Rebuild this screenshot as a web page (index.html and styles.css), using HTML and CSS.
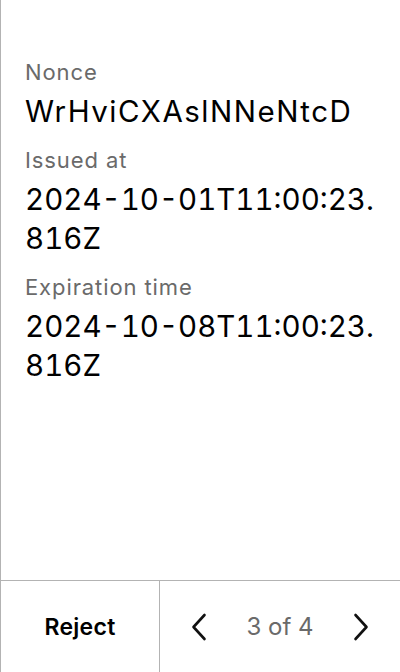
FILE: index.html
```html
<!DOCTYPE html>
<html lang="en">
<head>
<meta charset="utf-8">
<title>Sign request</title>
<link rel="stylesheet" href="styles.css">
</head>
<body>
<div class="screen">
  <main class="details">
    <div class="field">
      <div class="label">Nonce</div>
      <div class="value value-text">WrHviCXAslNNeNtcD</div>
    </div>
    <div class="field">
      <div class="label">Issued at</div>
      <div class="value">2024-10-01T11:00:23.816Z</div>
    </div>
    <div class="field">
      <div class="label">Expiration time</div>
      <div class="value">2024-10-08T11:00:23.816Z</div>
    </div>
  </main>
  <footer class="footer">
    <button class="reject">Reject</button>
    <div class="pager">
      <button class="arrow" aria-label="Previous">
        <svg viewBox="0 0 16 28" width="16" height="28"><polyline points="13.5,2 2.5,14 13.5,26" fill="none" stroke="#111" stroke-width="2.6" stroke-linecap="round" stroke-linejoin="round"/></svg>
      </button>
      <span class="count">3 of 4</span>
      <button class="arrow" aria-label="Next">
        <svg viewBox="0 0 16 28" width="16" height="28"><polyline points="2.5,2 13.5,14 2.5,26" fill="none" stroke="#111" stroke-width="2.6" stroke-linecap="round" stroke-linejoin="round"/></svg>
      </button>
    </div>
  </footer>
</div>
</body>
</html>
```
FILE: styles.css
```css
* { box-sizing: border-box; }
html, body { margin: 0; padding: 0; background: #fff; }
body { font-family: Inter, "Noto Sans", sans-serif; color: #000; }
.screen {
  width: 400px;
  height: 672px;
  border-left: 1px solid #b3b3b3;
  display: flex;
  flex-direction: column;
}
.details {
  flex: 1;
  padding: 57px 15px 0 24px;
  display: flex;
  flex-direction: column;
  gap: 14px;
}
.field { display: flex; flex-direction: column; gap: 5px; }
.label {
  font-size: 22px;
  line-height: 30px;
  letter-spacing: 0.9px;
  color: #6a6a6a;
}
.value {
  font-size: 29.5px;
  line-height: 39px;
  font-variant-numeric: tabular-nums;
  color: #000;
  word-break: break-all;
}
.value-text {
  letter-spacing: 1.5px;
}
.footer {
  height: 92px;
  border-top: 1px solid #b3b3b3;
  display: flex;
}
.reject {
  width: 159px;
  border: 0;
  border-right: 1px solid #b3b3b3;
  background: none;
  font-family: inherit;
  font-size: 23px;
  font-weight: 600;
  letter-spacing: 0.3px;
  color: #000;
  padding: 0;
}
.pager {
  flex: 1;
  display: flex;
  align-items: center;
  justify-content: space-between;
  padding: 0 31px 0 31px;
}
.arrow {
  border: 0;
  background: none;
  padding: 0;
  width: 16px;
  height: 28px;
  display: flex;
}
.count {
  font-size: 24px;
  color: #6a6a6a;
}
```
